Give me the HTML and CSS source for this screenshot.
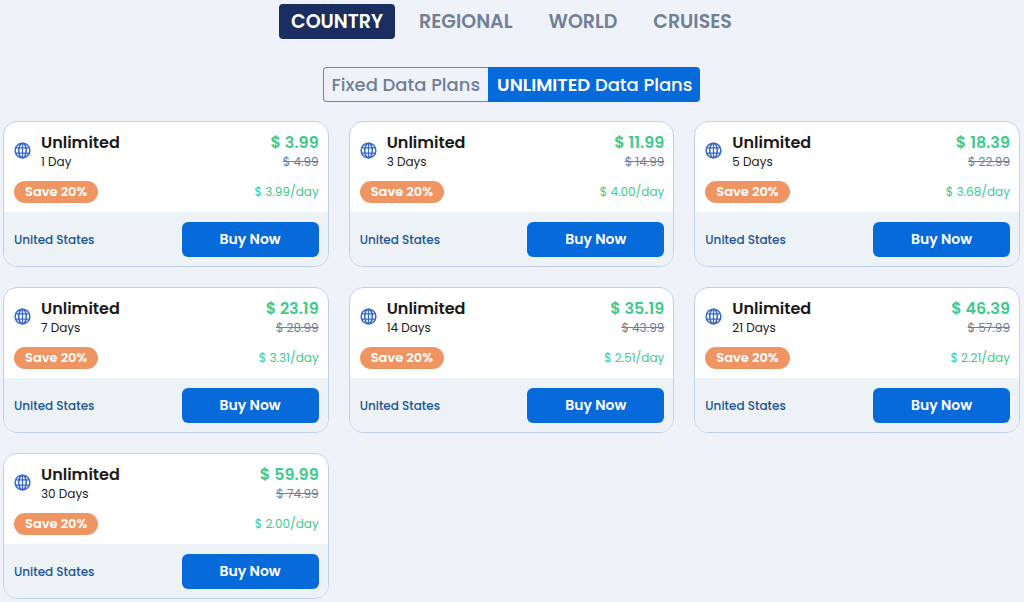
FILE: index.html
```html
<!DOCTYPE html>
<html lang="en">
<head>
    <meta charset="UTF-8">
    <meta name="viewport" content="width=device-width, initial-scale=1.0">
    <title>Unlimited Data Plans - United States</title>
    <link rel="stylesheet" href="styles.css">
</head>
<body>

<!-- Globe icon shared by all the plan cards -->
<svg class="icon-defs" width="0" height="0" aria-hidden="true">
    <symbol id="globe" viewBox="0 0 18 18">
        <g fill="none" stroke="currentColor" stroke-width="1.6">
            <circle cx="9" cy="9" r="7.8"/>
            <ellipse cx="9" cy="9" rx="4" ry="7.8"/>
            <path d="M9 1.3v15.4M2 6.2h14M2 11.8h14" stroke-width="1.3"/>
        </g>
    </symbol>
</svg>

<nav class="tabs">
    <button class="tab active">COUNTRY</button>
    <button class="tab">REGIONAL</button>
    <button class="tab">WORLD</button>
    <button class="tab">CRUISES</button>
</nav>

<div class="plan-type">
    <button class="type">Fixed Data Plans</button>
    <button class="type active"><strong>UNLIMITED</strong> Data Plans</button>
</div>

<main class="plans">
    <article class="card">
        <div class="card-top">
            <svg class="globe"><use href="#globe"/></svg>
            <div class="plan">
                <h2>Unlimited</h2>
                <p>1 Day</p>
            </div>
            <div class="price">
                <strong>$ 3.99</strong>
                <del>$ 4.99</del>
            </div>
        </div>
        <div class="card-save">
            <span class="badge">Save 20%</span>
            <span class="per-day">$ 3.99/day</span>
        </div>
        <div class="card-bottom">
            <a class="country" href="#">United States</a>
            <button class="buy">Buy Now</button>
        </div>
    </article>

    <article class="card">
        <div class="card-top">
            <svg class="globe"><use href="#globe"/></svg>
            <div class="plan">
                <h2>Unlimited</h2>
                <p>3 Days</p>
            </div>
            <div class="price">
                <strong>$ 11.99</strong>
                <del>$ 14.99</del>
            </div>
        </div>
        <div class="card-save">
            <span class="badge">Save 20%</span>
            <span class="per-day">$ 4.00/day</span>
        </div>
        <div class="card-bottom">
            <a class="country" href="#">United States</a>
            <button class="buy">Buy Now</button>
        </div>
    </article>

    <article class="card">
        <div class="card-top">
            <svg class="globe"><use href="#globe"/></svg>
            <div class="plan">
                <h2>Unlimited</h2>
                <p>5 Days</p>
            </div>
            <div class="price">
                <strong>$ 18.39</strong>
                <del>$ 22.99</del>
            </div>
        </div>
        <div class="card-save">
            <span class="badge">Save 20%</span>
            <span class="per-day">$ 3.68/day</span>
        </div>
        <div class="card-bottom">
            <a class="country" href="#">United States</a>
            <button class="buy">Buy Now</button>
        </div>
    </article>

    <article class="card">
        <div class="card-top">
            <svg class="globe"><use href="#globe"/></svg>
            <div class="plan">
                <h2>Unlimited</h2>
                <p>7 Days</p>
            </div>
            <div class="price">
                <strong>$ 23.19</strong>
                <del>$ 28.99</del>
            </div>
        </div>
        <div class="card-save">
            <span class="badge">Save 20%</span>
            <span class="per-day">$ 3.31/day</span>
        </div>
        <div class="card-bottom">
            <a class="country" href="#">United States</a>
            <button class="buy">Buy Now</button>
        </div>
    </article>

    <article class="card">
        <div class="card-top">
            <svg class="globe"><use href="#globe"/></svg>
            <div class="plan">
                <h2>Unlimited</h2>
                <p>14 Days</p>
            </div>
            <div class="price">
                <strong>$ 35.19</strong>
                <del>$ 43.99</del>
            </div>
        </div>
        <div class="card-save">
            <span class="badge">Save 20%</span>
            <span class="per-day">$ 2.51/day</span>
        </div>
        <div class="card-bottom">
            <a class="country" href="#">United States</a>
            <button class="buy">Buy Now</button>
        </div>
    </article>

    <article class="card">
        <div class="card-top">
            <svg class="globe"><use href="#globe"/></svg>
            <div class="plan">
                <h2>Unlimited</h2>
                <p>21 Days</p>
            </div>
            <div class="price">
                <strong>$ 46.39</strong>
                <del>$ 57.99</del>
            </div>
        </div>
        <div class="card-save">
            <span class="badge">Save 20%</span>
            <span class="per-day">$ 2.21/day</span>
        </div>
        <div class="card-bottom">
            <a class="country" href="#">United States</a>
            <button class="buy">Buy Now</button>
        </div>
    </article>

    <article class="card">
        <div class="card-top">
            <svg class="globe"><use href="#globe"/></svg>
            <div class="plan">
                <h2>Unlimited</h2>
                <p>30 Days</p>
            </div>
            <div class="price">
                <strong>$ 59.99</strong>
                <del>$ 74.99</del>
            </div>
        </div>
        <div class="card-save">
            <span class="badge">Save 20%</span>
            <span class="per-day">$ 2.00/day</span>
        </div>
        <div class="card-bottom">
            <a class="country" href="#">United States</a>
            <button class="buy">Buy Now</button>
        </div>
    </article>
</main>

</body>
</html>
```
FILE: styles.css
```css
* {
    box-sizing: border-box;
}

body {
    font-family: Poppins, Inter, sans-serif;
    background-color: #eff3f9;
    color: #1a1a1a;
    margin: 0;
    padding: 4px 4px 3px 3px;
}

button {
    font-family: inherit;
    border: none;
    cursor: pointer;
}

h2, p {
    margin: 0;
}

.icon-defs {
    display: none;
}

.tabs {
    display: flex;
    justify-content: center;
    gap: 12px;
}

.tab {
    height: 35px;
    padding: 0 12px;
    background: none;
    border-radius: 4px;
    color: #718096;
    font-size: 19px;
    font-weight: 600;
}

.tab.active {
    background-color: #1a2f5f;
    color: white;
}

.plan-type {
    display: flex;
    justify-content: center;
    margin: 28px 0 19px;
}

.type {
    height: 35px;
    padding: 0 8px;
    background: none;
    border: 1px solid #4a90d0;
    border-right: none;
    border-radius: 4px 0 0 4px;
    color: #718096;
    font-size: 18px;
    font-weight: 500;
}

.type.active {
    background-color: #076adb;
    border-color: #076adb;
    border-radius: 0 4px 4px 0;
    color: white;
}

.type strong {
    font-weight: 600;
}

.plans {
    display: grid;
    grid-template-columns: repeat(3, 1fr);
    gap: 20px;
}

.card {
    background-color: white;
    border: 1px solid #c3d0ea;
    border-radius: 14px;
    overflow: hidden;
}

.card-top {
    display: flex;
    padding: 10px 9px 0 10px;
}

.globe {
    width: 17px;
    height: 17px;
    margin: 10px 10px 0 0;
    color: #3568c8;
}

.plan h2 {
    font-size: 16px;
    font-weight: 600;
    line-height: 21px;
}

.plan p {
    font-size: 12px;
    line-height: 18px;
}

.price {
    display: flex;
    flex-direction: column;
    margin-left: auto;
    text-align: right;
}

.price strong {
    color: #41c98d;
    font-size: 16px;
    font-weight: 600;
    line-height: 21px;
}

.price del {
    color: #718096;
    font-size: 12px;
    line-height: 18px;
}

.card-save {
    display: flex;
    justify-content: space-between;
    align-items: center;
    padding: 10px 9px 9px 10px;
}

.badge {
    padding: 0 11px;
    background-color: #ef9563;
    border-radius: 11px;
    color: white;
    font-size: 13px;
    font-weight: 600;
    line-height: 22px;
}

.per-day {
    color: #41c98d;
    font-size: 12px;
}

.card-bottom {
    display: flex;
    justify-content: space-between;
    align-items: center;
    padding: 10px 9px 9px 10px;
    background-color: #edf2f6;
}

.country {
    color: #1c5596;
    font-size: 12px;
    font-weight: 500;
    text-decoration: none;
}

.buy {
    width: 45%;
    height: 35px;
    background-color: #076adb;
    border-radius: 6px;
    color: white;
    font-size: 14px;
    font-weight: 600;
}

.buy:hover {
    background-color: #055bc0;
}
```
